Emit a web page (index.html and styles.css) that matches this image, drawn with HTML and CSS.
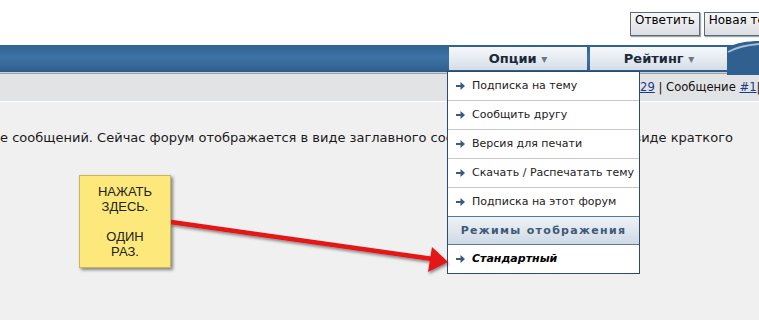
FILE: index.html
```html
<!DOCTYPE html>
<html>
<head>
    <meta charset="utf-8" />
    <title>Тема форума</title>
    <link rel="stylesheet" href="styles.css">
</head>
<body>
<div class="top">
    <span class="btn">Ответить</span>
    <span class="btn">Новая тема</span>
</div>
<div class="navbar">
    <div class="tab">Опции <span class="caret">&#9662;</span></div>
    <div class="tab">Рейтинг <span class="caret">&#9662;</span></div>
    <svg class="swoosh" width="32" height="34" viewBox="0 0 32 34">
        <path d="M0 6 C10 2 20 0 32 0 L32 34 L0 34 Z" fill="#2f6090"/>
        <path d="M1 11 C10 6 20 4 32 3" stroke="#a9bfd6" stroke-width="2" fill="none"/>
    </svg>
</div>
<div class="subbar">
    <span class="pager"><a href="#">29</a> | Сообщение <a href="#">#1</a>|</span>
</div>
<div class="content">
    <p class="line">е сообщений. Сейчас форум отображается в виде заглавного сообщения темы и ответов в виде краткого</p>
</div>

<div class="menu">
    <div class="item"><svg class="ico" width="9" height="8" viewBox="0 0 9 8"><path d="M0 3 H4.5 V0 L9 4 L4.5 8 V5 H0 Z"/></svg>Подписка на тему</div>
    <div class="item"><svg class="ico" width="9" height="8" viewBox="0 0 9 8"><path d="M0 3 H4.5 V0 L9 4 L4.5 8 V5 H0 Z"/></svg>Сообщить другу</div>
    <div class="item"><svg class="ico" width="9" height="8" viewBox="0 0 9 8"><path d="M0 3 H4.5 V0 L9 4 L4.5 8 V5 H0 Z"/></svg>Версия для печати</div>
    <div class="item"><svg class="ico" width="9" height="8" viewBox="0 0 9 8"><path d="M0 3 H4.5 V0 L9 4 L4.5 8 V5 H0 Z"/></svg>Скачать / Распечатать тему</div>
    <div class="item item-last"><svg class="ico" width="9" height="8" viewBox="0 0 9 8"><path d="M0 3 H4.5 V0 L9 4 L4.5 8 V5 H0 Z"/></svg>Подписка на этот форум</div>
    <div class="menu-head">Режимы отображения</div>
    <div class="item item-active"><svg class="ico" width="9" height="8" viewBox="0 0 9 8"><path d="M0 3 H4.5 V0 L9 4 L4.5 8 V5 H0 Z"/></svg>Стандартный</div>
</div>

<div class="note">НАЖАТЬ<br>ЗДЕСЬ.<br><br>ОДИН<br>РАЗ.</div>

<svg class="arrow" width="290" height="64" viewBox="0 0 290 64">
    <defs>
        <filter id="sh" x="-10%" y="-50%" width="120%" height="200%">
            <feDropShadow dx="1" dy="2" stdDeviation="1.5" flood-color="#000" flood-opacity="0.45"/>
        </filter>
    </defs>
    <g filter="url(#sh)">
        <path d="M0 6 L262 43" stroke="#e51212" stroke-width="4.5" fill="none"/>
        <path d="M277 46 L261 31 L257 56 Z" fill="#e51212"/>
    </g>
</svg>
</body>
</html>
```

FILE: styles.css
```css
*{margin:0;padding:0;}
html,body{width:759px;height:320px;overflow:hidden;}
body{background:#f0f0f0;font-family:"DejaVu Sans",Verdana,sans-serif;color:#111;position:relative;}
a{color:#1f3a8a;text-decoration:underline;}

.top{
    height:45px;
    background:#fff;
    display:flex;
    align-items:flex-start;
    gap:4px;
    padding-left:630px;
    box-sizing:border-box;
    white-space:nowrap;
    overflow:hidden;
}
.btn{
    margin-top:12px;
    height:22px;
    line-height:22px;
    padding:0 4px;
    font:12px "DejaVu Sans",Tahoma,sans-serif;
    color:#000;
    border:1px solid #5a6a7a;
    background:linear-gradient(#f7f7f7,#dcdee2);
    box-shadow:1px 1px 1px #9aa;
    flex-shrink:0;
}

.navbar{
    height:28px;
    background:linear-gradient(#30608f 0%,#3e73a6 45%,#386b9c 70%,#2d5c8b 100%);
    border-bottom:1px solid #c9d0d8;
    display:flex;
    align-items:flex-start;
    gap:3px;
    padding:2px 0 0 449px;
    box-sizing:border-box;
    position:relative;
}
.tab{
    width:138px;
    height:23px;
    line-height:23px;
    text-align:center;
    font-weight:bold;
    font-size:13px;
    color:#1b2a3a;
    background:linear-gradient(#f6f8fa,#e3e9ef 60%,#d3dde7);
}
.caret{color:#6d7884;font-size:12px;font-weight:normal;}
.swoosh{position:absolute;right:0;top:-4px;}

.subbar{
    height:27px;
    background:#e2e3e5;
    border-top:1px solid #9ea3a8;
    border-bottom:1px solid #fff;
    font-size:11.6px;
    line-height:26px;
    padding-left:640px;
    white-space:nowrap;
    overflow:hidden;
}
.pager a{color:#1a3a8a;}

.content{padding-top:28px;}
.line{font-size:13px;white-space:nowrap;color:#1a1a1a;}

.menu{
    position:absolute;
    left:447px;
    top:71px;
    width:191px;
    background:#fff;
    border:1px solid #2c4a6e;
    font-size:11px;
    color:#222;
}
.item{
    height:28px;
    line-height:28px;
    border-bottom:1px solid #c8c8c8;
    padding-left:8px;
    white-space:nowrap;
}
.item-last{border-bottom:1px solid #5b7896;}
.item-active{border-bottom:none;font-weight:bold;font-style:italic;color:#000;}
.ico{fill:#3d5a7c;margin-right:7px;vertical-align:-0.5px;}
.menu-head{
    height:27px;
    line-height:27px;
    text-align:center;
    font-weight:bold;
    font-size:11px;
    letter-spacing:1.3px;
    color:#3f5a77;
    background:linear-gradient(#eef2f6,#cfdae5);
    border-bottom:1px solid #5b7896;
}

.note{
    position:absolute;
    left:79px;
    top:175px;
    width:92px;
    height:93px;
    box-sizing:border-box;
    padding-top:8px;
    background:#fde97b;
    border:1px solid #c9b65a;
    box-shadow:2px 2px 3px rgba(0,0,0,.45);
    font:13px/15px "Liberation Sans",Arial,sans-serif;
    text-align:center;
    color:#222;
}
.arrow{position:absolute;left:171px;top:216px;}
```
